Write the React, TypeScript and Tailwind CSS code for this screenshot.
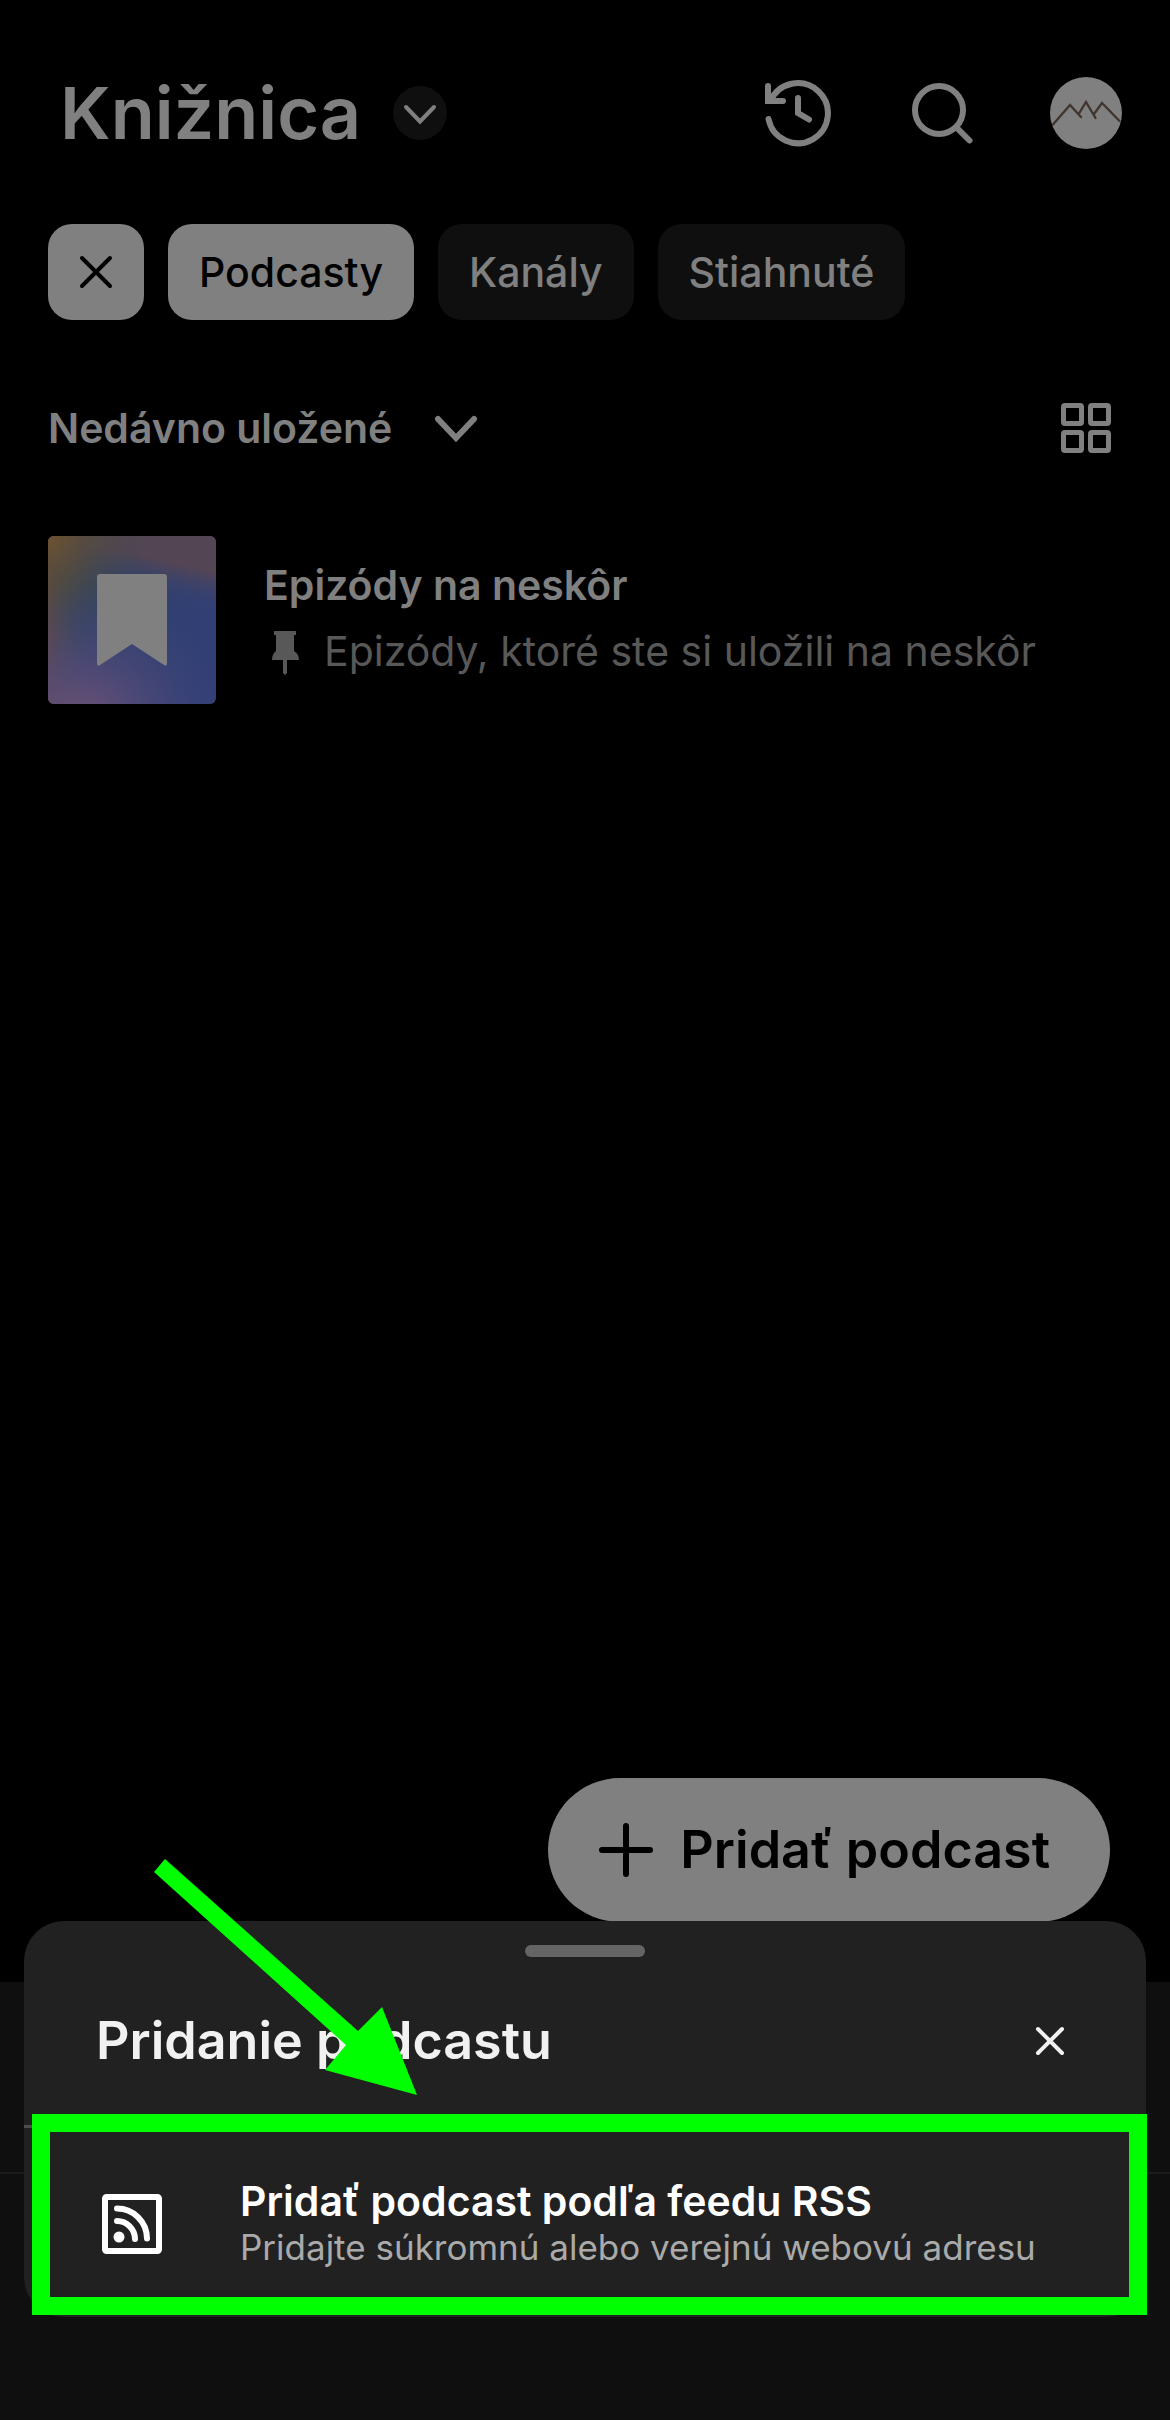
import type { ReactNode } from 'react'

type IconProps = { className?: string; children: ReactNode }

function Icon({ className = '', children }: IconProps) {
  return (
    <svg
      viewBox="0 0 72 72"
      fill="none"
      stroke="currentColor"
      strokeWidth="6"
      strokeLinecap="round"
      aria-hidden="true"
      className={`block h-[72px] w-[72px] shrink-0 ${className}`}
    >
      {children}
    </svg>
  )
}

const filters = [
  { label: 'Podcasty', active: true },
  { label: 'Kanály', active: false },
  { label: 'Stiahnuté', active: false },
]

function Header() {
  return (
    <header className="flex items-center justify-between pl-[60px] pr-12 pt-[77px]">
      <div className="flex items-center gap-8">
        <h1 className="text-[72px] leading-[72px] font-semibold">Knižnica</h1>
        <button aria-label="Zmeniť zobrazenie" className="flex h-[54px] w-[54px] items-center justify-center rounded-full bg-[#0f0f0f]">
          <svg viewBox="0 0 54 54" fill="none" stroke="currentColor" strokeWidth="4" strokeLinecap="round" aria-hidden="true" className="h-[54px] w-[54px]">
            <path d="M13 21 27 35.500 41 21" />
          </svg>
        </button>
      </div>

      <div className="flex items-center gap-[72px]">
        <button aria-label="História">
          <Icon>
            <path d="M6 9v15h15" />
            <path d="M8.500 24A30 30 0 1 1 6.500 42" />
            <path d="M36 21v15l11 6.500" />
          </Icon>
        </button>
        <button aria-label="Hľadať">
          <Icon>
            <circle cx="33" cy="33" r="24" />
            <path d="m51 51 12.500 12.500" />
          </Icon>
        </button>
        <button aria-label="Účet">
          <svg viewBox="0 0 72 72" fill="none" aria-hidden="true" className="h-[72px] w-[72px]">
            <circle cx="36" cy="36" r="36" fill="#808080" />
            <path d="M3 47.500 20 28l11 12M29 36.500 36 25l9.500 16M44 37l8-11 17.500 18" stroke="#40352f" strokeWidth="2.400" strokeLinecap="round" />
          </svg>
        </button>
      </div>
    </header>
  )
}

function FilterBar() {
  return (
    <div className="mt-[75px] flex gap-6 px-12">
      <button aria-label="Zrušiť filter" className="flex h-24 w-24 items-center justify-center rounded-3xl bg-[#808080] text-black">
        <svg viewBox="0 0 36 36" fill="none" stroke="currentColor" strokeWidth="4" strokeLinecap="round" aria-hidden="true" className="h-9 w-9">
          <path d="m4 4 28 28M32 4 4 32" />
        </svg>
      </button>
      {filters.map((filter) => (
        <button
          key={filter.label}
          aria-pressed={filter.active}
          className={`h-24 rounded-3xl px-[31px] text-[41px] leading-[48px] font-medium ${
            filter.active ? 'bg-[#808080] text-black' : 'bg-[#0f0f0f]'
          }`}
        >
          {filter.label}
        </button>
      ))}
    </div>
  )
}

function EpisodeList() {
  return (
    <ul className="mt-[72px] px-12">
      <li>
        <a href="#neskor" className="flex items-center gap-12">
          <svg viewBox="0 0 168 168" aria-hidden="true" className="h-[168px] w-[168px] shrink-0 rounded-md">
            <defs>
              <linearGradient id="base" x1="0" y1="0.200" x2="1" y2="0.500">
                <stop offset="0" stopColor="#3b474f" />
                <stop offset="0.500" stopColor="#30416c" />
                <stop offset="1" stopColor="#323f76" />
              </linearGradient>
              <radialGradient id="amber" cx="0" cy="0" r="0.600">
                <stop offset="0" stopColor="#6d5230" />
                <stop offset="0.350" stopColor="#584c3c" stopOpacity="0.800" />
                <stop offset="1" stopColor="#3a4752" stopOpacity="0" />
              </radialGradient>
              <linearGradient id="top" x1="0.050" y1="0" x2="0" y2="0.220">
                <stop offset="0" stopColor="#5a4650" stopOpacity="0.850" />
                <stop offset="1" stopColor="#38426a" stopOpacity="0" />
              </linearGradient>
              <linearGradient id="side" x1="0" y1="0" x2="0.220" y2="0">
                <stop offset="0" stopColor="#65483a" />
                <stop offset="1" stopColor="#434850" stopOpacity="0" />
              </linearGradient>
              <radialGradient id="plum" cx="0.200" cy="1.150" r="0.850">
                <stop offset="0" stopColor="#735373" />
                <stop offset="0.400" stopColor="#564b78" stopOpacity="0.800" />
                <stop offset="1" stopColor="#404578" stopOpacity="0" />
              </radialGradient>
            </defs>
            <rect width="168" height="168" fill="url(#base)" />
            <rect width="168" height="168" fill="url(#top)" />
            <rect width="168" height="168" fill="url(#side)" />
            <rect width="168" height="168" fill="url(#amber)" />
            <rect width="168" height="168" fill="url(#plum)" />
            <path d="M52 38h64q3 0 3 3v86q0 4-3 2L84 108l-32 21q-3 2-3-2V41q0-3 3-3Z" fill="#808080" />
          </svg>
          <div className="min-w-0 pb-1">
            <p className="text-[41px] leading-[66px] font-semibold">Epizódy na neskôr</p>
            <div className="flex items-center gap-6 text-[#585858]">
              <svg viewBox="0 0 36 48" fill="currentColor" aria-hidden="true" className="h-12 w-9">
                <path d="M10 4h22v4h-2v16q5 3 5 9H23v13l-2 2-2-2V33H8q0-6 4-9V8h-2Z" />
              </svg>
              <p className="text-[41px] leading-[66px]">Epizódy, ktoré ste si uložili na neskôr</p>
            </div>
          </div>
        </a>
      </li>
    </ul>
  )
}

function AddPodcastSheet() {
  return (
    <section aria-labelledby="sheet-title" className="fixed inset-x-6 bottom-[103px] rounded-[40px] bg-[#212121] text-[#f1f1f1]">
      <div className="mx-auto h-9 w-[120px] pt-6">
        <div className="h-3 rounded-full bg-[#656565]" />
      </div>
      <div className="flex h-[168px] items-center justify-between pl-[72px] pr-[60px]">
        <h2 id="sheet-title" className="text-[52px] leading-[66px] font-semibold">Pridanie podcastu</h2>
        <button aria-label="Zavrieť">
          <Icon>
            <path d="m24 24 24 24M48 24 24 48" strokeWidth="4" />
          </Icon>
        </button>
      </div>
      <button className="flex h-48 w-full items-center gap-[72px] border-t-[3px] border-[#4d4d4d] pt-0.5 pl-[72px] text-left">
        <Icon className="text-white">
          <rect x="9" y="9" width="54" height="54" rx="1.500" />
          <path d="M21 20.500a30 30 0 0 1 30 30M21 33a18 18 0 0 1 18 18" />
          <circle cx="23" cy="49" r="5.500" fill="currentColor" stroke="none" />
        </Icon>
        <span className="block">
          <span className="block text-[41px] leading-[48px] font-semibold text-white">Pridať podcast podľa feedu RSS</span>
          <span className="block text-[35px] leading-[45px] text-[#aaaaaa]">Pridajte súkromnú alebo verejnú webovú adresu</span>
        </span>
      </button>

      {/* Tutorial highlight around the RSS row */}
      <div className="pointer-events-none absolute -right-px bottom-0.5 left-2 h-[201px] border-[18px] border-[#00ff00]" />
      <svg viewBox="0 0 264 236" fill="#00ff00" aria-hidden="true" className="pointer-events-none absolute left-[129px] -top-[62px] h-[236px] w-[264px]">
        <path d="M12 0 205 172 229 148 264 236 172 211 193 186 1 13Z" />
      </svg>
    </section>
  )
}

export default function App() {
  return (
    <div className="flex min-h-screen flex-col bg-black font-['Inter','Liberation_Sans',sans-serif] text-[#808080]">
      <Header />

      <main className="flex flex-1 flex-col">
        <FilterBar />
        <div className="mt-[72px] flex items-center justify-between px-12">
          <button className="flex items-center gap-7 text-[41px] leading-[72px] font-semibold">
            Nedávno uložené
            <Icon>
              <path d="M18 27 36 46 54 27" />
            </Icon>
          </button>
          <button aria-label="Zobraziť ako mriežku">
            <Icon>
              <g strokeWidth="5">
                <rect x="13.500" y="13.500" width="18" height="18" rx="1.500" />
                <rect x="40.500" y="13.500" width="18" height="18" rx="1.500" />
                <rect x="13.500" y="40.500" width="18" height="18" rx="1.500" />
                <rect x="40.500" y="40.500" width="18" height="18" rx="1.500" />
              </g>
            </Icon>
          </button>
        </div>
        <EpisodeList />

        <button className="mt-auto mr-[60px] mb-[60px] flex h-36 items-center gap-[18px] self-end rounded-full bg-[#808080] pr-[60px] pl-[42px] text-[52px] leading-[66px] font-semibold text-black">
          <Icon>
            <path d="M36 12v48M12 36h48" />
          </Icon>
          Pridať podcast
        </button>
      </main>

      {/* Mini player and tab bar, dimmed behind the sheet */}
      <footer className="bg-[#0f0f0f]">
        <div className="h-[190px]" />
        <div className="h-[248px] border-t-2 border-[#1c1c1c]" />
      </footer>

      <AddPodcastSheet />
    </div>
  )
}
